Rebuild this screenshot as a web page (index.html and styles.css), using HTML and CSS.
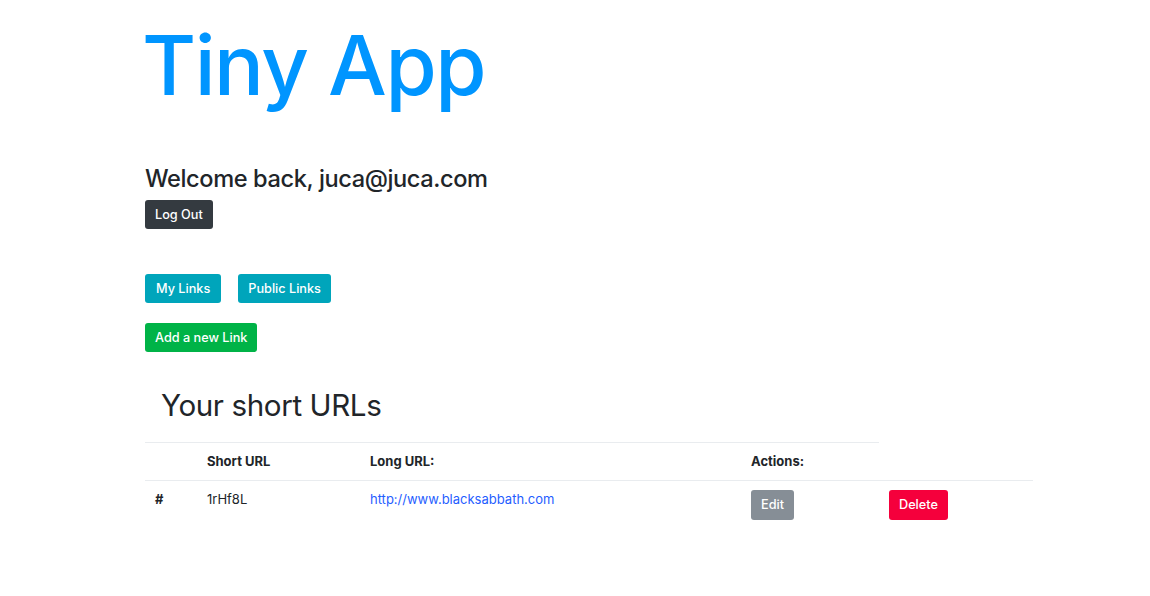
FILE: index.html
```html
<!DOCTYPE html>
<html>
<head>
<meta charset="utf-8">
<link rel="stylesheet" href="styles.css">
</head>
<body>
<div class="container">
  <h1 class="title">Tiny App</h1>
  <h4 class="welcome">Welcome back, juca@juca.com</h4>
  <button class="btn btn-dark">Log Out</button>
  <div class="nav-buttons">
    <button class="btn btn-info">My Links</button>
    <button class="btn btn-info">Public Links</button>
  </div>
  <div class="add-row">
    <button class="btn btn-success">Add a new Link</button>
  </div>
  <h2 class="section">Your short URLs</h2>
  <table class="urls">
    <thead>
      <tr>
        <th class="c1"></th>
        <th class="c2">Short URL</th>
        <th class="c3">Long URL:</th>
        <th class="c4">Actions:</th>
      </tr>
    </thead>
    <tbody>
      <tr>
        <th class="c1">#</th>
        <td class="c2">1rHf8L</td>
        <td class="c3"><a href="#">http://www.blacksabbath.com</a></td>
        <td class="c4"><button class="btn btn-secondary">Edit</button></td>
        <td class="c5"><button class="btn btn-danger">Delete</button></td>
      </tr>
    </tbody>
  </table>
</div>
</body>
</html>
```

FILE: styles.css
```css
* { box-sizing: border-box; }
body {
  margin: 0;
  font-family: Inter, "Liberation Sans", sans-serif;
  color: #212529;
  background: #fff;
  font-size: 14px;
}
.container {
  width: 888px;
  margin-left: 145px;
}
.title {
  margin: 16px 0 0 -3px;
  font-size: 83px;
  font-weight: 500;
  line-height: 1.2;
  color: #0095ff;
  letter-spacing: -1.5px;
}
.welcome {
  margin: 49px 0 7px;
  font-size: 23.6px;
  font-weight: 500;
  line-height: 1.2;
  letter-spacing: -0.4px;
}
.btn {
  display: inline-block;
  border: none;
  border-radius: 3px;
  font-family: inherit;
  font-size: 12.7px;
  font-weight: 500;
  color: #fff;
  height: 29px;
  padding: 0 10px;
  line-height: 29px;
  cursor: pointer;
}
.btn-dark { background: #343a40; }
.btn-info { background: #00a5bb; }
.btn-success { background: #00b347; }
.btn-secondary { background: #868e96; }
.btn-danger { background: #f5003c; }
.nav-buttons {
  display: flex;
  gap: 17px;
  margin-top: 45px;
}
.nav-buttons .btn:first-child { padding: 0 11px; }
.add-row { margin-top: 20px; }
.section {
  margin: 36px 0 0 16px;
  font-size: 29.6px;
  font-weight: 400;
  line-height: 1.2;
  height: 54px;
  letter-spacing: -0.4px;
}
.urls {
  width: 888px;
  border-collapse: collapse;
  table-layout: fixed;
}
.urls th, .urls td {
  text-align: left;
  vertical-align: top;
  padding: 8px 10px;
  line-height: 21px;
  font-size: 13px;
  border-top: 1px solid #e9ecef;
}
.urls th { font-weight: 700; }
.urls td { font-weight: 400; }
.urls tbody td, .urls tbody th { padding-top: 8px; padding-bottom: 30px; }
.urls .btn { margin-top: 1px; height: 30px; line-height: 30px; }
.c1 { width: 52px; }
.c2 { width: 163px; }
.c3 { width: 381px; }
.c4 { width: 138px; }
.c5 { width: 154px; }
a { color: #1f5eff; text-decoration: none; }
```
